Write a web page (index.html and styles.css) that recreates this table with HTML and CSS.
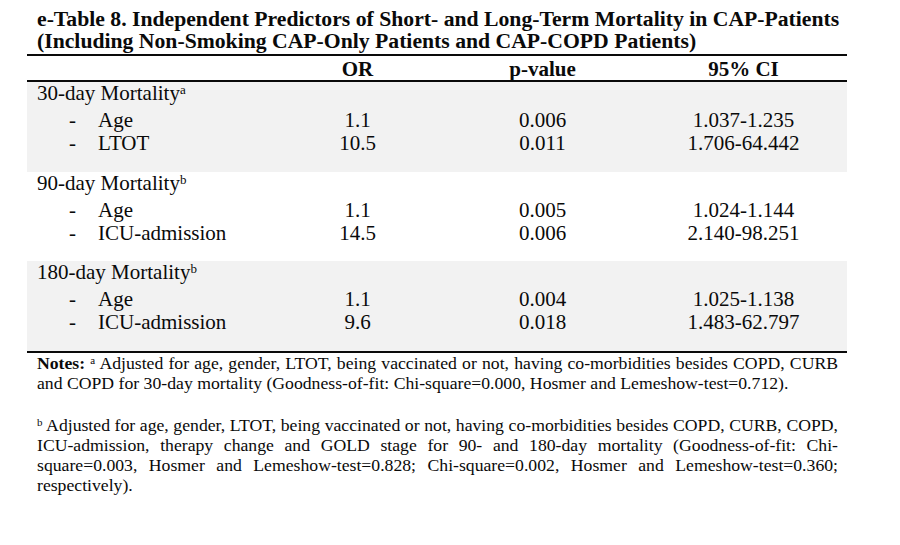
FILE: index.html
```html
<!DOCTYPE html>
<html>
<head>
<meta charset="utf-8">
<link rel="stylesheet" href="styles.css">
</head>
<body>
<div class="page">
  <h1 class="title"><span class="tline">e-Table 8. Independent Predictors of Short- and Long-Term Mortality in CAP-Patients</span><span class="tline">(Including Non-Smoking CAP-Only Patients and CAP-COPD Patients)</span></h1>
  <div class="table">
    <div class="row head"><span></span><span>OR</span><span>p-value</span><span>95% CI</span></div>
    <div class="group shaded">
      <div class="ghead">30-day Mortality<sup>a</sup></div>
      <div class="row"><span class="item"><span class="dash">-</span>Age</span><span>1.1</span><span>0.006</span><span>1.037-1.235</span></div>
      <div class="row"><span class="item"><span class="dash">-</span>LTOT</span><span>10.5</span><span>0.011</span><span>1.706-64.442</span></div>
    </div>
    <div class="group">
      <div class="ghead">90-day Mortality<sup>b</sup></div>
      <div class="row"><span class="item"><span class="dash">-</span>Age</span><span>1.1</span><span>0.005</span><span>1.024-1.144</span></div>
      <div class="row"><span class="item"><span class="dash">-</span>ICU-admission</span><span>14.5</span><span>0.006</span><span>2.140-98.251</span></div>
    </div>
    <div class="group shaded">
      <div class="ghead">180-day Mortality<sup>b</sup></div>
      <div class="row"><span class="item"><span class="dash">-</span>Age</span><span>1.1</span><span>0.004</span><span>1.025-1.138</span></div>
      <div class="row"><span class="item"><span class="dash">-</span>ICU-admission</span><span>9.6</span><span>0.018</span><span>1.483-62.797</span></div>
    </div>
  </div>
  <div class="notes">
    <p><span class="jl"><b>Notes:</b> <sup>a</sup> Adjusted for age, gender, LTOT, being vaccinated or not, having co-morbidities besides COPD, CURB</span><span class="ll">and COPD for 30-day mortality (Goodness-of-fit: Chi-square=0.000, Hosmer and Lemeshow-test=0.712).</span></p>
    <p><span class="jl"><sup>b</sup> Adjusted for age, gender, LTOT, being vaccinated or not, having co-morbidities besides COPD, CURB, COPD,</span><span class="jl">ICU-admission, therapy change and GOLD stage for 90- and 180-day mortality (Goodness-of-fit: Chi-</span><span class="jl">square=0.003, Hosmer and Lemeshow-test=0.828; Chi-square=0.002, Hosmer and Lemeshow-test=0.360;</span><span class="ll">respectively).</span></p>
  </div>
</div>
</body>
</html>
```

FILE: styles.css
```css
html, body {
  margin: 0;
  padding: 0;
  background: #fff;
}
body {
  font-family: "Liberation Serif", "Times New Roman", serif;
  color: #0a0a0a;
}
.page {
  padding: 8px 0 0 27px;
  width: 820px;
}
.title {
  margin: 0 0 2px;
  padding-left: 10px;
  font-size: 21.7px;
  line-height: 22px;
  font-weight: bold;
  white-space: nowrap;
}
.tline {
  display: block;
}
.table {
  width: 820px;
  border-top: 2px solid #0a0a0a;
  border-bottom: 2px solid #0a0a0a;
  font-size: 21px;
}
.row {
  display: grid;
  grid-template-columns: 243px 175px 195px 207px;
  line-height: 23px;
}
.row > span {
  text-align: center;
}
.row > span.item {
  text-align: left;
  padding-left: 42px;
}
.dash {
  display: inline-block;
  width: 29px;
}
.head {
  font-weight: bold;
  line-height: 24px;
  padding-top: 1px;
  height: 23px;
  border-bottom: 2px solid #0a0a0a;
}
.group {
  padding-bottom: 16.5px;
}
.shaded {
  background: #f2f2f2;
}
.ghead {
  padding-left: 10px;
  line-height: 23px;
  margin-bottom: 4px;
}
sup {
  font-size: 0.62em;
  line-height: 0;
  vertical-align: 0.45em;
}
.notes {
  padding-left: 10px;
  width: 801px;
  font-size: 17.7px;
  line-height: 20px;
}
.notes p {
  margin: 0 0 22px;
}
.jl {
  display: block;
  text-align: justify;
  text-align-last: justify;
  word-spacing: -1.5px;
}
.ll {
  display: block;
  text-align: left;
}
```
